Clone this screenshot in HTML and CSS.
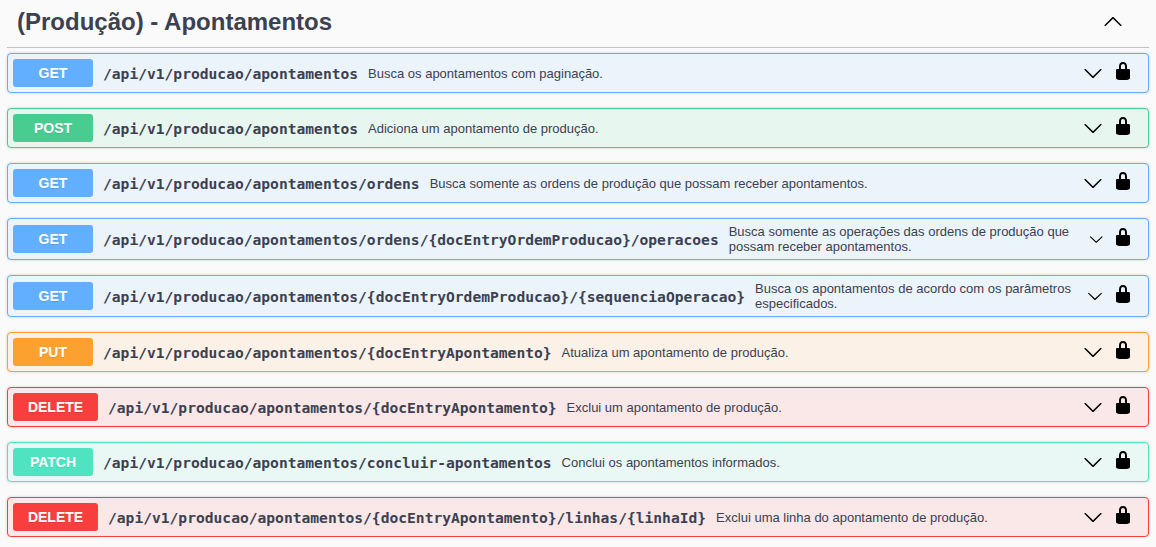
FILE: index.html
```
<!DOCTYPE html>
<html lang="pt-BR">
<head>
<meta charset="utf-8">
<title>(Produção) - Apontamentos</title>
<link rel="stylesheet" href="styles.css">
</head>
<body>
<svg class="sprite" aria-hidden="true">
  <symbol id="arrow" viewBox="0 0 20 20"><path d="M17.418 6.109c.272-.268.709-.268.979 0s.271.701 0 .969l-7.908 7.83c-.27.268-.707.268-.979 0l-7.908-7.83c-.27-.268-.27-.701 0-.969.271-.268.709-.268.979 0L10 13.25l7.418-7.141z"/></symbol>
  <symbol id="lock" viewBox="0 0 20 20"><path d="M15.8 8H14V5.6C14 2.703 12.665 1 10 1 7.334 1 6 2.703 6 5.6V8H4c-.553 0-1 .646-1 1.199V17c0 .549.428 1.139.951 1.307l1.197.387C5.672 18.861 6.55 19 7.1 19h5.8c.549 0 1.428-.139 1.951-.307l1.196-.387c.524-.167.953-.757.953-1.306V9.199C17 8.646 16.352 8 15.8 8zM12 8H8V5.199C8 3.754 8.797 3 10 3c1.203 0 2 .754 2 2.199V8z"/></symbol>
</svg>
<section class="tag">
  <header class="tag-header">
    <h3 class="tag-title">(Produção) - Apontamentos</h3>
    <svg class="arrow arrow-up"><use href="#arrow"/></svg>
  </header>
  <div class="operations">
    <div class="op get"><span class="method">GET</span><span class="path">/api/v1/producao/apontamentos</span><span class="desc">Busca os apontamentos com paginação.</span><svg class="arrow"><use href="#arrow"/></svg><svg class="lock"><use href="#lock"/></svg></div>
    <div class="op post"><span class="method">POST</span><span class="path">/api/v1/producao/apontamentos</span><span class="desc">Adiciona um apontamento de produção.</span><svg class="arrow"><use href="#arrow"/></svg><svg class="lock"><use href="#lock"/></svg></div>
    <div class="op get"><span class="method">GET</span><span class="path">/api/v1/producao/apontamentos/ordens</span><span class="desc">Busca somente as ordens de produção que possam receber apontamentos.</span><svg class="arrow"><use href="#arrow"/></svg><svg class="lock"><use href="#lock"/></svg></div>
    <div class="op get tall"><span class="method">GET</span><span class="path">/api/v1/producao/apontamentos/ordens/{docEntryOrdemProducao}/operacoes</span><span class="desc">Busca somente as operações das ordens de produção que<br>possam receber apontamentos.</span><svg class="arrow arrow-small"><use href="#arrow"/></svg><svg class="lock"><use href="#lock"/></svg></div>
    <div class="op get tall"><span class="method">GET</span><span class="path">/api/v1/producao/apontamentos/{docEntryOrdemProducao}/{sequenciaOperacao}</span><span class="desc">Busca os apontamentos de acordo com os parâmetros<br>especificados.</span><svg class="arrow arrow-medium"><use href="#arrow"/></svg><svg class="lock"><use href="#lock"/></svg></div>
    <div class="op put"><span class="method">PUT</span><span class="path">/api/v1/producao/apontamentos/{docEntryApontamento}</span><span class="desc">Atualiza um apontamento de produção.</span><svg class="arrow"><use href="#arrow"/></svg><svg class="lock"><use href="#lock"/></svg></div>
    <div class="op delete"><span class="method">DELETE</span><span class="path">/api/v1/producao/apontamentos/{docEntryApontamento}</span><span class="desc">Exclui um apontamento de produção.</span><svg class="arrow"><use href="#arrow"/></svg><svg class="lock"><use href="#lock"/></svg></div>
    <div class="op patch"><span class="method">PATCH</span><span class="path">/api/v1/producao/apontamentos/concluir-apontamentos</span><span class="desc">Conclui os apontamentos informados.</span><svg class="arrow"><use href="#arrow"/></svg><svg class="lock"><use href="#lock"/></svg></div>
    <div class="op delete"><span class="method">DELETE</span><span class="path">/api/v1/producao/apontamentos/{docEntryApontamento}/linhas/{linhaId}</span><span class="desc">Exclui uma linha do apontamento de produção.</span><svg class="arrow"><use href="#arrow"/></svg><svg class="lock"><use href="#lock"/></svg></div>
  </div>
</section>
</body>
</html>
```
FILE: styles.css
```
* { box-sizing: border-box; }
body {
  margin: 0;
  background: #fafafa;
  color: #3b4151;
  font-family: "Liberation Sans", Arial, sans-serif;
  overflow: hidden;
}
.sprite { display: none; }
.tag { padding: 0 7px; }
.tag-header {
  display: flex;
  align-items: center;
  justify-content: space-between;
  height: 48px;
  padding: 0 26px 4px 10px;
  border-bottom: 1px solid rgba(59, 65, 81, .3);
}
.tag-title { margin: 0; font-size: 24px; line-height: 28px; font-weight: 700; }
.arrow { width: 20px; height: 20px; flex: none; }
.arrow-up { transform: rotate(180deg); }
.arrow-small { width: 14.5px; height: 14.5px; }
.arrow-medium { width: 16px; height: 16px; }
.operations { display: flex; flex-direction: column; gap: 15px; padding-top: 5px; }
.op {
  display: flex;
  align-items: center;
  height: 40px;
  padding: 0 15px 0 5px;
  border: 1px solid var(--accent);
  border-radius: 4px;
  background: var(--tint);
  box-shadow: 0 0 3px rgba(0, 0, 0, .19);
}
.tall { height: 42px; }
.get { --accent: #61affe; --tint: #ebf3fb; }
.post { --accent: #49cc90; --tint: #e8f6f0; }
.put { --accent: #fca130; --tint: #fbf1e6; }
.delete { --accent: #f93e3e; --tint: #fae7e7; }
.patch { --accent: #50e3c2; --tint: #e9f8f5; }
.method {
  flex: none;
  min-width: 80px;
  height: 28px;
  border-radius: 3px;
  background: var(--accent);
  color: #fff;
  font-size: 14px;
  font-weight: 700;
  line-height: 28px;
  text-align: center;
  text-shadow: 0 1px 0 rgba(0, 0, 0, .1);
}
.delete .method { width: 85px; }
.path {
  flex: none;
  padding: 2px 10px 0;
  font: 700 14.61px/18px "DejaVu Sans Mono", monospace;
}
.desc { flex: 1; font-size: 13px; line-height: 15px; white-space: nowrap; }
.lock { flex: none; width: 20px; height: 20px; margin: 0 0 4px 10px; }
```
